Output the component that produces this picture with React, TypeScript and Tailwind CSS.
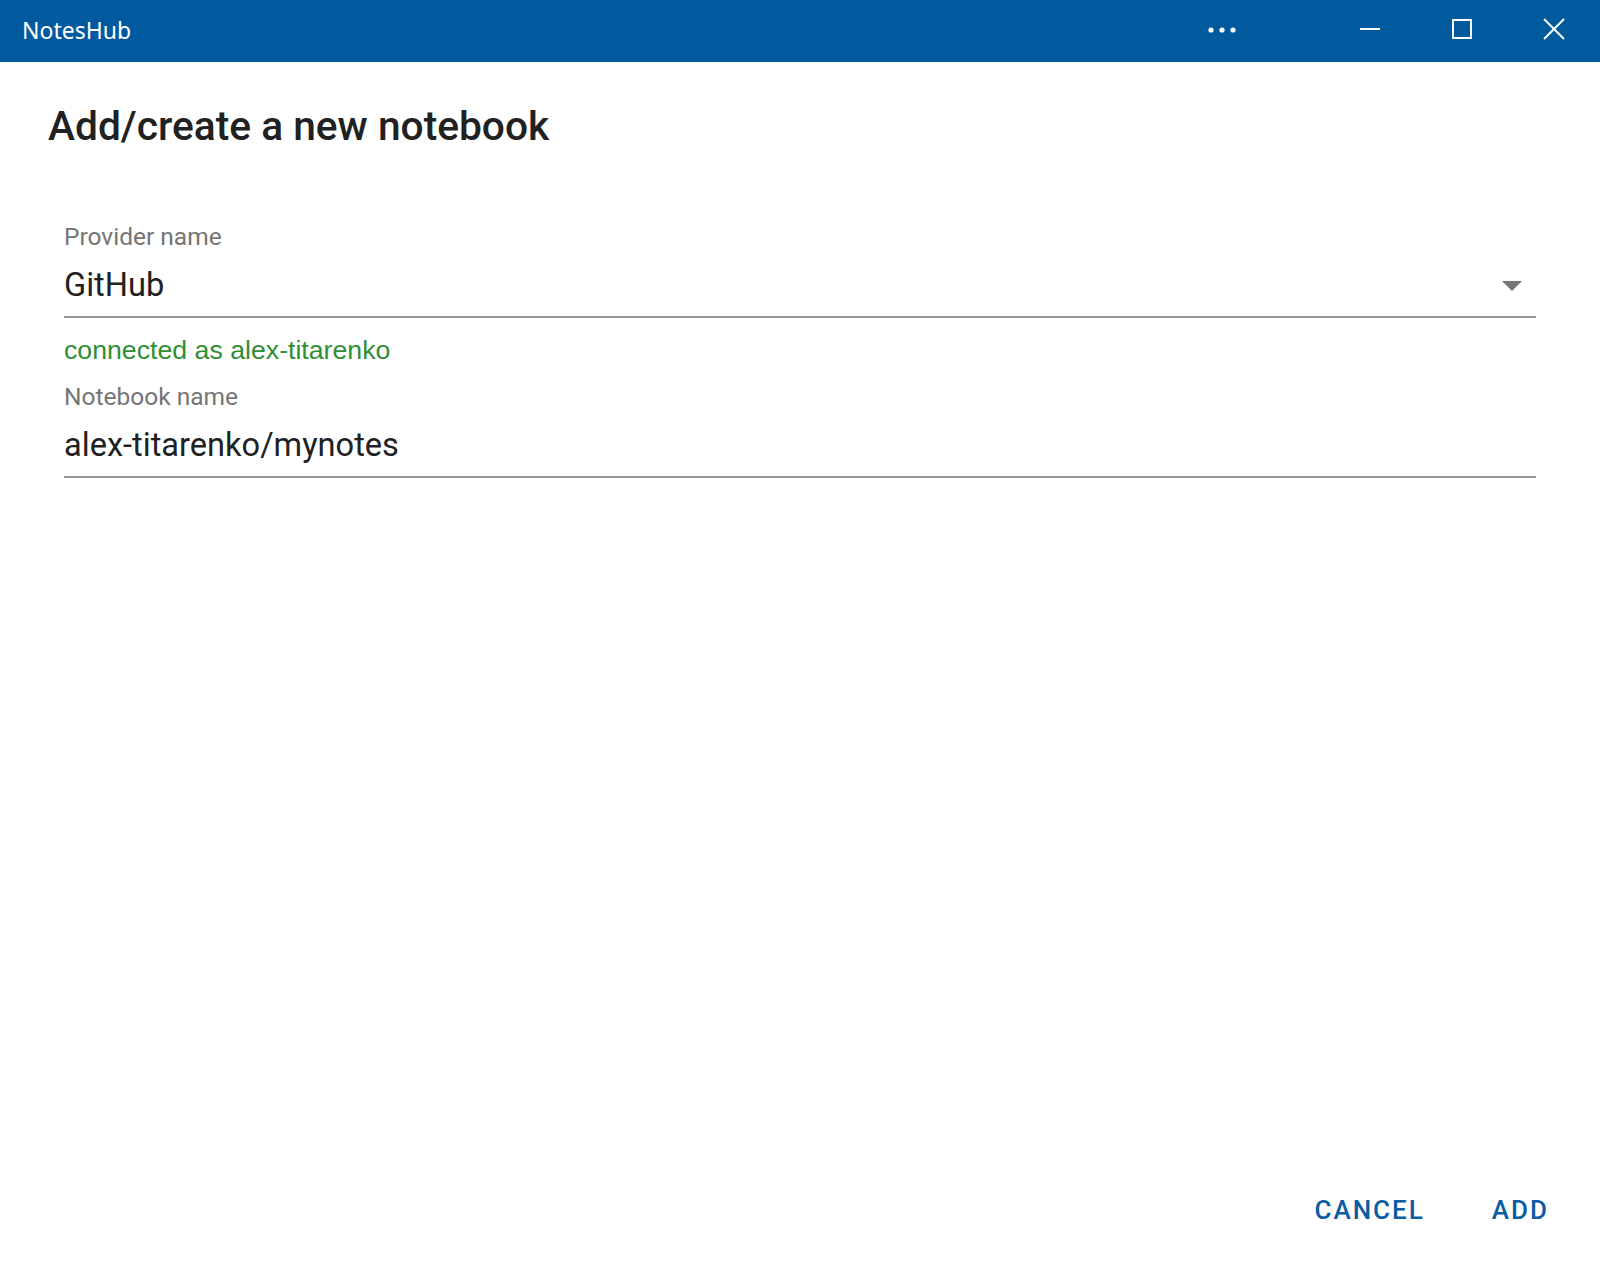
import React from "react";

export default function App() {
  return (
    <div className="w-[1600px] h-[1262px] bg-white flex flex-col overflow-hidden" style={{ fontFamily: "Roboto, 'Liberation Sans', sans-serif" }}>
      {/* Title bar */}
      <div className="h-[62px] bg-[#01599e] flex items-start shrink-0">
        <div className="pl-[22px] pt-[15px] text-white text-[23px] leading-[30px]" style={{ fontFamily: "'Noto Sans', 'Open Sans', sans-serif" }}>
          NotesHub
        </div>
        <div className="flex-1" />
        <div className="flex items-start">
          <div className="w-[60px] h-[60px] flex items-center justify-center mr-[72px]">
            <svg width="30" height="8" viewBox="0 0 30 8">
              <circle cx="4" cy="4" r="2.6" fill="white" />
              <circle cx="15" cy="4" r="2.6" fill="white" />
              <circle cx="26" cy="4" r="2.6" fill="white" />
            </svg>
          </div>
          <div className="w-[92px] h-[58px] flex items-center justify-center">
            <svg width="22" height="22" viewBox="0 0 22 22">
              <line x1="1" y1="11" x2="21" y2="11" stroke="white" strokeWidth="2" />
            </svg>
          </div>
          <div className="w-[92px] h-[58px] flex items-center justify-center">
            <svg width="22" height="22" viewBox="0 0 22 22">
              <rect x="2" y="2" width="18" height="18" fill="none" stroke="white" strokeWidth="2" />
            </svg>
          </div>
          <div className="w-[92px] h-[58px] flex items-center justify-center">
            <svg width="22" height="22" viewBox="0 0 22 22">
              <line x1="1" y1="1" x2="21" y2="21" stroke="white" strokeWidth="2" />
              <line x1="21" y1="1" x2="1" y2="21" stroke="white" strokeWidth="2" />
            </svg>
          </div>
        </div>
      </div>

      {/* Content */}
      <div className="flex-1 flex flex-col">
        <h1 className="mt-[40px] ml-[48px] text-[40.7px] leading-[48px] font-medium text-[#212121]">
          Add/create a new notebook
        </h1>

        <div className="mt-[71px] mx-[64px] flex flex-col">
          <div className="text-[24.5px] leading-[32px] text-[#757575]">Provider name</div>
          <div className="mt-[12px] pb-[11px] border-b-2 border-[#949494] flex items-center">
            <div className="flex-1 text-[32.6px] leading-[40px] text-[#212121]">GitHub</div>
            <svg width="20" height="10" viewBox="0 0 20 10" className="mr-[14px] mt-[2px]">
              <polygon points="0,0 20,0 10,10" fill="#757575" />
            </svg>
          </div>
          <div className="mt-[16px] text-[26.7px] leading-[32px] text-[#2f8e36]" style={{ fontFamily: "'Liberation Sans', Arial, sans-serif" }}>
            connected as alex-titarenko
          </div>

          <div className="mt-[15px] text-[24.5px] leading-[32px] text-[#757575]">Notebook name</div>
          <div className="mt-[12px] pb-[11px] border-b-2 border-[#949494]">
            <div className="text-[32.6px] leading-[40px] text-[#212121]">alex-titarenko/mynotes</div>
          </div>
        </div>

        <div className="flex-1" />

        <div className="flex justify-end items-center pr-[51px] pb-[36px] gap-[67px]">
          <button className="text-[26px] leading-[32px] font-medium tracking-[2px] text-[#0a5ca3]">CANCEL</button>
          <button className="text-[26px] leading-[32px] font-medium tracking-[2px] text-[#0a5ca3]">ADD</button>
        </div>
      </div>
    </div>
  );
}
